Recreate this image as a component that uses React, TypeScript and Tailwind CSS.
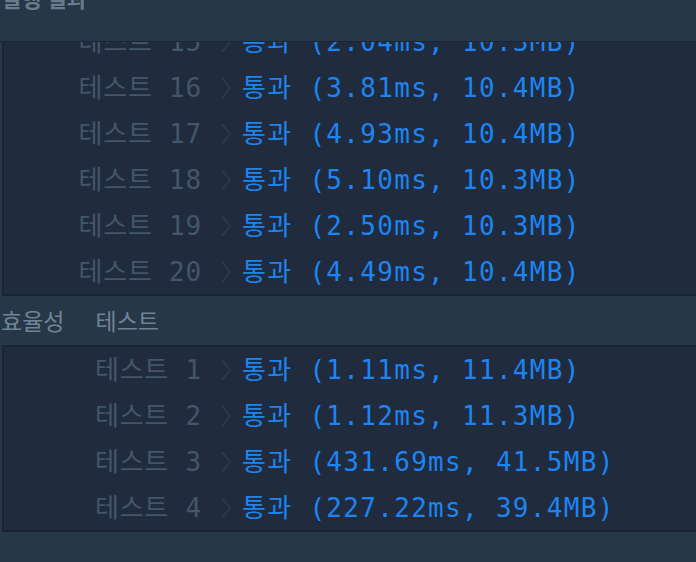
import React from "react";

const rows1 = [
  ["15", "2.04ms, 10.3MB"],
  ["16", "3.81ms, 10.4MB"],
  ["17", "4.93ms, 10.4MB"],
  ["18", "5.10ms, 10.3MB"],
  ["19", "2.50ms, 10.3MB"],
  ["20", "4.49ms, 10.4MB"],
];
const rows2 = [
  ["1", "1.11ms, 11.4MB"],
  ["2", "1.12ms, 11.3MB"],
  ["3", "431.69ms, 41.5MB"],
  ["4", "227.22ms, 39.4MB"],
];

function Chevron() {
  return (
    <svg width="12" height="24" viewBox="0 0 12 24" className="shrink-0">
      <polyline points="2,2 10,12 2,22" fill="none" stroke="#2d3b4e" strokeWidth="1.6" />
    </svg>
  );
}

function Row({ n, r }: { n: string; r: string }) {
  return (
    <div className="h-[46px] flex items-center shrink-0">
      <div className="w-[198px] text-right text-[26px] text-[#44566a] whitespace-pre tracking-[0.8px] font-['DejaVu_Sans_Mono','Noto_Sans_CJK_KR',monospace]">
        테스트 {n}
      </div>
      <div className="w-[40px] flex justify-start pl-[18px]">
        <Chevron />
      </div>
      <div className="text-[26px] tracking-[1.3px] text-[#1c85f2] whitespace-pre font-['DejaVu_Sans_Mono','Noto_Sans_CJK_KR',monospace]">
        통과 ({r})
      </div>
    </div>
  );
}

export default function App() {
  return (
    <div className="w-[696px] h-[562px] bg-[#263747] overflow-hidden flex flex-col">
      <div className="h-[42px] shrink-0 border-b border-[#1b2534] overflow-hidden">
        <div className="mt-[-19px] ml-[1px] text-[22px] font-bold text-[#6a7b8c] font-['Noto_Sans_CJK_KR',sans-serif]">
          실행 결과
        </div>
      </div>
      <div className="h-[254px] shrink-0 ml-[2px] bg-[#202b3d] border-l-2 border-b-2 border-[#1a2433] overflow-hidden flex flex-col justify-end">
        <div className="flex flex-col mb-[-1px]">
          {rows1.map(([n, r]) => (
            <Row key={n} n={n} r={r} />
          ))}
        </div>
      </div>
      <div className="h-[49px] shrink-0 flex items-center text-[23px] text-[#6e8596] font-['Noto_Sans_CJK_KR',sans-serif]">
        <span className="ml-[1px]">효율성</span>
        <span className="ml-[31px]">테스트</span>
      </div>
      <div className="h-[187px] shrink-0 ml-[2px] bg-[#202b3d] border-2 border-r-0 border-[#1a2433] flex flex-col">
        {rows2.map(([n, r]) => (
          <Row key={n} n={n} r={r} />
        ))}
      </div>
    </div>
  );
}
